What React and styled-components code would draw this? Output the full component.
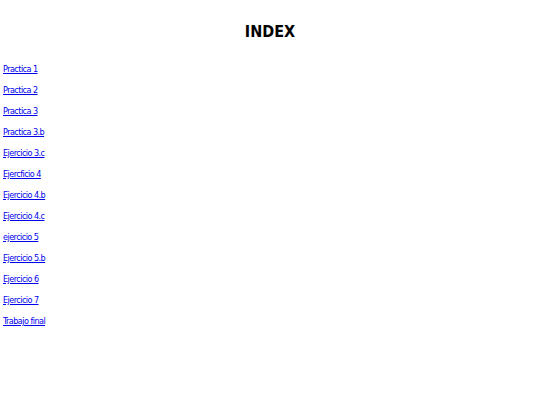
import React from 'react';
import styled, { createGlobalStyle } from 'styled-components';

const GlobalStyle = createGlobalStyle`
  body {
    margin: 0;
    background: #fff;
    font-family: "DejaVu Sans Condensed", "DejaVu Sans", sans-serif;
  }
`;

const Page = styled.div`
  display: flex;
  flex-direction: column;
  padding: 0 3px;
`;

const Heading = styled.h1`
  margin: 20px 0 20px;
  text-align: center;
  font-size: 16px;
  font-weight: 700;
  line-height: 24px;
  color: #000;
`;

const LinkList = styled.nav`
  display: flex;
  flex-direction: column;
  align-items: flex-start;
  gap: 10px;
`;

const PageLink = styled.a`
  font-size: 9px;
  line-height: 11px;
  letter-spacing: -0.55px;
  color: #0000ee;
  text-decoration: underline;
`;

const pages = [
  'Practica 1',
  'Practica 2',
  'Practica 3',
  'Practica 3.b',
  'Ejercicio 3.c',
  'Ejercficio 4',
  'Ejercicio 4.b',
  'Ejercicio 4.c',
  'ejercicio 5',
  'Ejercicio 5.b',
  'Ejercicio 6',
  'Ejercicio 7',
  'Trabajo final',
];

const App = () => {
  return (
    <>
      <GlobalStyle />
      <Page>
        <Heading>INDEX</Heading>
        <LinkList>
          {pages.map((name) => (
            <PageLink key={name} href="#">{name}</PageLink>
          ))}
        </LinkList>
      </Page>
    </>
  );
};

export default App;
